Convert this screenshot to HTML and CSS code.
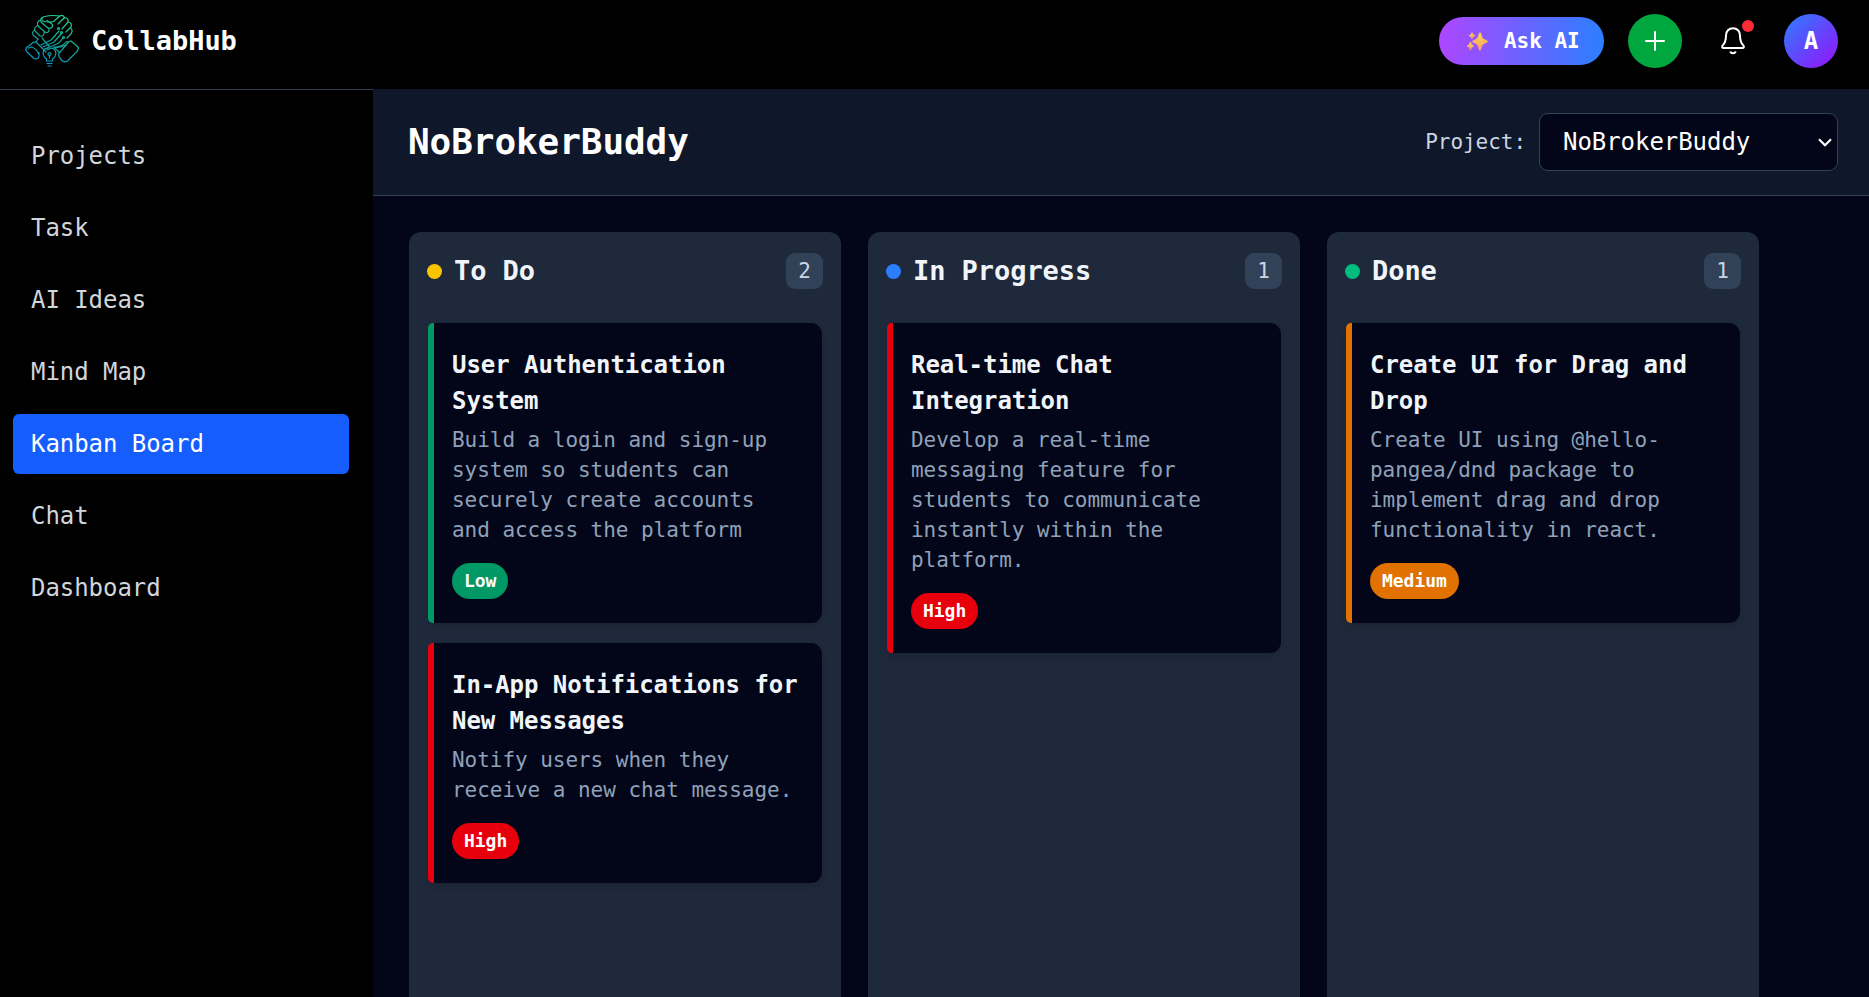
FILE: index.html
```html
<!DOCTYPE html>
<html lang="en">
<head>
<meta charset="utf-8">
<title>CollabHub</title>
<link rel="stylesheet" href="styles.css">
</head>
<body>
<header class="topbar">
  <div class="brand">
    <svg class="logo" viewBox="0 0 54 54" fill="none" stroke="url(#lg)" stroke-width="1.200" stroke-linecap="round" stroke-linejoin="round">
      <defs><linearGradient id="lg" gradientUnits="userSpaceOnUse" x1="38" y1="4" x2="16" y2="50"><stop offset="0" stop-color="#22d08c"/><stop offset=".55" stop-color="#109f98"/><stop offset="1" stop-color="#0a97d0"/></linearGradient></defs>
      <path d="M20 2.500c-2.500 0-4 2.500-2.500 4.500 3 1 9 1.500 11 .5L35 2c2-1.500 5 0 4 2.500M20 2.500C25 1 31 1.500 35 2M33 10l6-6c2.500-1 5 1.500 4 4l-6 7M43 8c3 0 4.500 3 2.500 5.500L41 18M46 14c1.500 2 1 5-1 7l-3 3"/>
      <path d="M18 3c-3 1-3 4-1 6l6 5c3 1 5-1 4.500-3.500L22 6.500M15.500 6c-3 1-4 4-2 6.500l7 6c3 .5 4.500-2 3-4.500M12 12c-3 1-3 4-1 6l4 4c3 .5 4.500-1 4-4M10 16c-3 1-3 4-1 6l4 3"/>
      <path d="M16 31l10-5 8-9M18 33l11-5 8-9M20 35c8-5 12-2 18-11M22 36c7-4 12-1 19-5"/>
      <circle cx="33.500" cy="14.500" r="1"/><circle cx="36.500" cy="18.500" r="1"/><circle cx="38.500" cy="23.500" r="1"/>
      <path d="M13 25l-2 3 10 10M17 24l7 8M11 28c-1.500-.8-2.500.4-3.500 1l-3 2.500-2 1c-2 2-2 4-.5 5.500l7 6.500c2.500 1 5 0 5-3v-3M3.500 34l3-1c3 1 6 4 7.500 7.500"/>
      <path d="M29 33c5 0 9-1 12-5l5-1 7.500 6.500-1 3.500-10 10c-2 1.500-4 1-5.500-.5-3-3-4-5-3-7L43.500 28M29 33l5 5"/>
      <path d="M21.500 47v-2c-3.500-2.500-4-5-3-8 2-4 10-4 12 0 1 3 .5 5.500-3 8v2zM22 49.500h5M23 52h3M24.500 44v-3"/><circle cx="24.500" cy="40" r="1.500"/>
    </svg>
    <span class="brand-name">CollabHub</span>
  </div>
  <div class="actions">
    <button class="ask">
      <svg class="sparkles" viewBox="0 0 21 19"><defs><linearGradient id="sp" x1="0" y1="0" x2="0" y2="1"><stop offset="0" stop-color="#ffd84f"/><stop offset="1" stop-color="#ff9a68"/></linearGradient></defs><g fill="url(#sp)" stroke="url(#sp)" stroke-width=".6"><path d="M13 .5c.9 0 1.400 4.300 2.600 5.800s5.100 2.400 5.100 3.200-3.900 1.700-5.100 3.200-1.700 5.800-2.600 5.800-1.400-4.300-2.600-5.800S5.300 10.300 5.300 9.500s3.900-1.700 5.100-3.200S12.100.5 13 .5z"/><path d="M5 .5c.4 0 .6 1.700 1 2.100S8 3.300 8 3.700s-1.600.6-2 1S5.400 7 5 7s-.6-1.900-1-2.300-2-.6-2-1 1.600-.7 2-1.100S4.600.5 5 .5z"/><path d="M3.500 10c.4 0 .7 2 1.200 2.500S7 13.500 7 14s-1.800.8-2.300 1.300S3.900 18 3.500 18s-.7-2.200-1.200-2.700S0 14.500 0 14s1.800-1 2.300-1.500S3.100 10 3.500 10z"/></g></svg>
      <span>Ask AI</span>
    </button>
    <button class="add" aria-label="Add"><svg viewBox="0 0 20 20" stroke="#fff" stroke-width="2" stroke-linecap="round"><path d="M10 1v18M1 10h18"/></svg></button>
    <button class="bell" aria-label="Notifications">
      <svg viewBox="0 0 24 28" fill="none" stroke="#fff" stroke-width="2" stroke-linecap="round" stroke-linejoin="round"><path d="M12 1.200c-4.200 0-7 3.100-7 7.200 0 5.200-1 7.600-3.300 10-1 1.200-.6 2.500.8 2.500h19c1.400 0 1.800-1.300.8-2.500C20 16 19 13.600 19 8.400c0-4.100-2.800-7.200-7-7.200zM9.600 25.200c1.200 1.500 3.600 1.500 4.800 0"/></svg>
      <span class="bell-dot"></span>
    </button>
    <div class="avatar">A</div>
  </div>
</header>
<div class="shell">
  <nav class="sidebar">
    <a class="nav-item">Projects</a>
    <a class="nav-item">Task</a>
    <a class="nav-item">AI Ideas</a>
    <a class="nav-item">Mind Map</a>
    <a class="nav-item active">Kanban Board</a>
    <a class="nav-item">Chat</a>
    <a class="nav-item">Dashboard</a>
  </nav>
  <main class="main">
    <div class="board-head">
      <h1>NoBrokerBuddy</h1>
      <div class="picker">
        <span class="picker-label">Project:</span>
        <div class="select"><span>NoBrokerBuddy</span><svg viewBox="0 0 14 9" fill="none" stroke="#fff" stroke-width="2.200"><path d="M1 1.200l6 6 6-6"/></svg></div>
      </div>
    </div>
    <div class="board">
      <section class="column">
        <div class="column-head"><i class="dot todo"></i><h2>To Do</h2><span class="count">2</span></div>
        <article class="card low">
          <h3>User Authentication System</h3>
          <p>Build a login and sign-up system so students can securely create accounts and access the platform</p>
          <span class="tag">Low</span>
        </article>
        <article class="card high">
          <h3>In-App Notifications for New Messages</h3>
          <p>Notify users when they receive a new chat message.</p>
          <span class="tag">High</span>
        </article>
      </section>
      <section class="column">
        <div class="column-head"><i class="dot progress"></i><h2>In Progress</h2><span class="count">1</span></div>
        <article class="card high">
          <h3>Real-time Chat Integration</h3>
          <p>Develop a real-time messaging feature for students to communicate instantly within the platform.</p>
          <span class="tag">High</span>
        </article>
      </section>
      <section class="column">
        <div class="column-head"><i class="dot done"></i><h2>Done</h2><span class="count">1</span></div>
        <article class="card medium">
          <h3>Create UI for Drag and Drop</h3>
          <p>Create UI using @hello-pangea/dnd package to implement drag and drop functionality in react.</p>
          <span class="tag">Medium</span>
        </article>
      </section>
    </div>
  </main>
</div>
</body>
</html>
```
FILE: styles.css
```css
* { box-sizing: border-box; margin: 0; }
body {
  height: 997px;
  display: flex;
  flex-direction: column;
  overflow: hidden;
  background: #000;
  color: #fff;
  font: 24px/36px "DejaVu Sans Mono", monospace;
}
h1, h2, h3, p, span, a { letter-spacing: -0.002em; }
button { border: 0; padding: 0; color: inherit; font: inherit; background: none; }
.topbar {
  flex: none;
  height: 89px;
  padding: 0 31px 7px 25px;
  display: flex;
  align-items: center;
  justify-content: space-between;
}
.brand { display: flex; align-items: center; gap: 12px; }
.logo { width: 54px; height: 54px; }
.brand-name { font-size: 27px; font-weight: 700; }
.actions { display: flex; align-items: center; }
.ask {
  width: 165px;
  height: 48px;
  padding-left: 28px;
  display: flex;
  align-items: center;
  gap: 16px;
  border-radius: 24px;
  background: linear-gradient(90deg, #ad46ff, #2b7fff);
  font-size: 21px;
  font-weight: 700;
}
.ask span { white-space: nowrap; }
.sparkles { flex: none; width: 21px; height: 19px; }
.add, .avatar {
  width: 54px;
  height: 54px;
  border-radius: 50%;
  display: flex;
  align-items: center;
  justify-content: center;
}
.add { margin-left: 24px; background: #00a63e; }
.add svg { width: 20px; height: 20px; }
.bell { position: relative; width: 30px; height: 36px; margin-left: 36px; display: flex; align-items: center; justify-content: center; }
.bell svg { width: 24px; height: 28px; }
.bell-dot { position: absolute; right: -6px; top: -3px; width: 12px; height: 12px; border-radius: 50%; background: #fb2c36; }
.avatar { margin-left: 36px; background: linear-gradient(135deg, #2b7fff, #9810fa); font-weight: 700; }
.shell { flex: 1; display: flex; min-height: 0; }
.sidebar {
  flex: none;
  width: 373px;
  padding: 36px 24px 0 13px;
  border-top: 1px solid #333e48;
  display: flex;
  flex-direction: column;
  gap: 12px;
}
.nav-item { padding: 12px 18px; border-radius: 6px; color: #d1d5dc; }
.nav-item.active { background: #155dfc; color: #fff; }
.main { flex: 1; display: flex; flex-direction: column; background: #020618; }
.board-head {
  height: 107px;
  padding: 0 31px 0 35px;
  display: flex;
  align-items: center;
  justify-content: space-between;
  background: #0f172b;
  border-bottom: 1px solid #314158;
}
h1 { font-size: 36px; font-weight: 700; }
.picker { display: flex; align-items: center; gap: 13px; }
.picker-label { font-size: 21px; color: #cad5e2; }
.select {
  width: 299px;
  height: 58px;
  padding: 0 5px 0 23px;
  display: flex;
  align-items: center;
  justify-content: space-between;
  border: 1px solid #314158;
  border-radius: 9px;
  background: #020618;
}
.select svg { width: 14px; height: 9px; }
.board { flex: 1; min-height: 0; padding: 36px 36px 0; display: flex; gap: 27px; }
.column { width: 432px; padding: 18px 19px; border-radius: 12px 12px 0 0; background: #1e293b; }
.column-head { height: 42px; margin: 0 -1px 31px; display: flex; align-items: center; }
.dot { width: 15px; height: 15px; margin-right: 12px; border-radius: 50%; }
.todo { background: #f9c400; }
.progress { background: #2b7fff; }
.done { background: #00bc7d; }
h2 { flex: 1; font-size: 27px; font-weight: 700; color: #f1f5f9; }
.count {
  width: 37px;
  height: 36px;
  border-radius: 9px;
  background: #314158;
  color: #cad5e2;
  font-size: 21px;
  text-align: center;
}
.card {
  padding: 24px 18px 24px 24px;
  margin-bottom: 20px;
  border-radius: 5px 11px 11px 5px;
  background: linear-gradient(90deg, var(--priority) 6px, #020618 6px);
  box-shadow: 0 4px 9px -1px rgba(0, 0, 0, .15);
}
h3 { font-size: 24px; font-weight: 700; color: #f1f5f9; }
.card p { margin: 6px 0 18px; font-size: 21px; line-height: 30px; color: #90a1b9; }
.tag { display: block; width: fit-content; padding: 0 12px; border-radius: 18px; background: var(--priority); font-size: 18px; font-weight: 700; color: #fff; }
.low { --priority: #009966; }
.medium { --priority: #e17100; }
.high { --priority: #e7000b; }
```
